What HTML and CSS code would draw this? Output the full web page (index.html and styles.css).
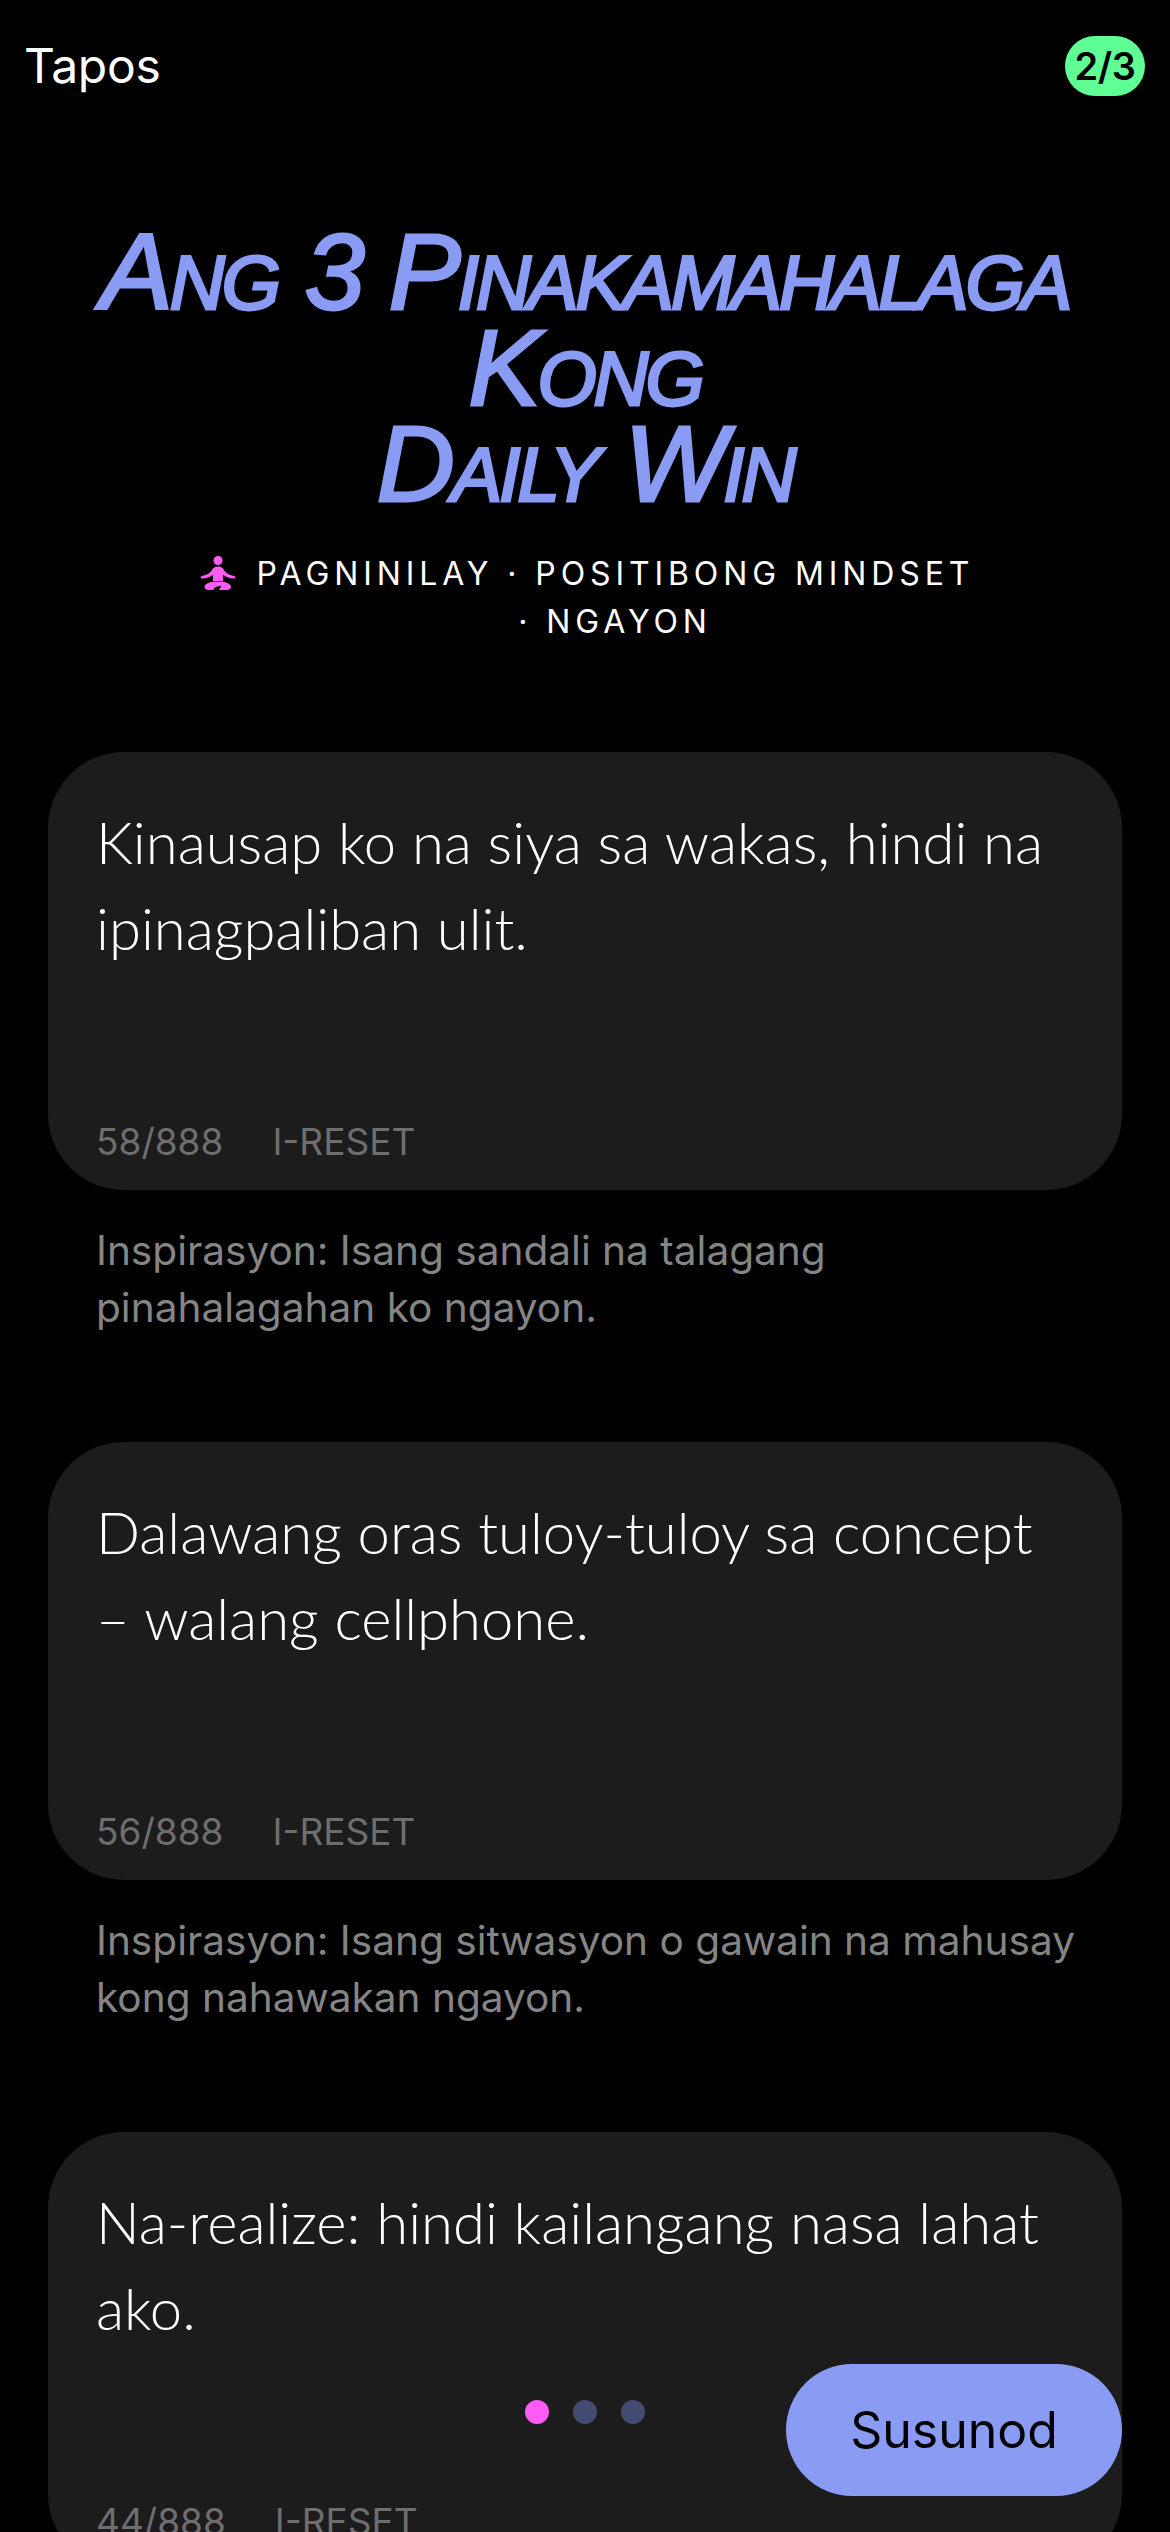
FILE: index.html
```html
<!DOCTYPE html>
<html lang="tl">
<head>
<meta charset="utf-8">
<title>Tapos</title>
<link rel="stylesheet" href="styles.css">
</head>
<body>
<div class="screen">
  <header class="topbar">
    <span class="done">Tapos</span>
    <span class="badge">2/3</span>
  </header>
  <section class="hero">
    <h1 class="title">Ang 3 Pinakamahalaga<br>Kong<br>Daily Win</h1>
    <p class="sub">
      <svg class="yoga" viewBox="0 0 36 34" aria-hidden="true"><circle cx="18" cy="4.500" r="4.500"/><path d="M18 10.500c-3 0-4.800 1.300-6 3.500-1.700 2.900-4.500 4.800-10.200 6-1.700.4-1.600 2.600.3 2.500 4.900-.1 8.500-1.600 10.900-3.700v6.500h10v-6.500c2.400 2.100 6 3.600 10.900 3.700 1.900.1 2-2.100.3-2.500-5.700-1.200-8.500-3.100-10.200-6-1.200-2.200-3-3.500-6-3.500z"/><path d="M12 25.800c-4 1-7.500 2.600-7.500 5 0 1.800 1.700 3.200 4.300 3.200h4.500c.8-2.400 3.500-4 8.200-4.200l-2.500 4.200h7.700c2.600 0 4.300-1.400 4.300-3.200 0-2.400-3.500-4-7.500-5z"/></svg>
      PAGNINILAY · POSITIBONG MINDSET <span class="tail">· NGAYON</span>
    </p>
  </section>
  <main class="list">
    <article class="entry">
      <div class="card">
        <p class="text">Kinausap ko na siya sa wakas, hindi na ipinagpaliban ulit.</p>
        <div class="meta"><span>58/888</span><span>I-RESET</span></div>
      </div>
      <p class="hint">Inspirasyon: Isang sandali na talagang pinahalagahan ko ngayon.</p>
    </article>
    <article class="entry">
      <div class="card">
        <p class="text">Dalawang oras tuloy-tuloy sa concept – walang cellphone.</p>
        <div class="meta"><span>56/888</span><span>I-RESET</span></div>
      </div>
      <p class="hint">Inspirasyon: Isang sitwasyon o gawain na mahusay kong nahawakan ngayon.</p>
    </article>
    <article class="entry">
      <div class="card">
        <p class="text">Na-realize: hindi kailangang nasa lahat ako.</p>
        <div class="meta"><span>44/888</span><span>I-RESET</span></div>
      </div>
    </article>
  </main>
  <div class="dots"><i class="dot on"></i><i class="dot"></i><i class="dot"></i></div>
  <button class="next">Susunod</button>
</div>
</body>
</html>
```
FILE: styles.css
```css
* { box-sizing: border-box; }
html, body { margin: 0; padding: 0; background: #000; }
.screen {
  position: relative;
  width: 1170px;
  height: 2532px;
  overflow: hidden;
  background: #000;
  color: #fff;
  font-family: Inter, "Liberation Sans", sans-serif;
}
.topbar {
  display: flex;
  justify-content: space-between;
  align-items: center;
  height: 60px;
  margin-top: 36px;
  padding: 0 25px 0 24px;
}
.done { font-size: 48px; line-height: 60px; letter-spacing: -0.3px; }
.badge {
  width: 80px;
  height: 60px;
  border-radius: 30px;
  background: #5fff96;
  color: #000;
  font-size: 38px;
  font-weight: 600;
  line-height: 60px;
  text-align: center;
  letter-spacing: -0.5px;
}
.hero { padding: 128px 48px 0; text-align: center; }
.title {
  margin: 0;
  color: #8a9bf4;
  font-family: "Liberation Sans", sans-serif;
  font-size: 108px;
  font-style: italic;
  font-weight: 400;
  font-variant: small-caps;
  line-height: 96px;
  letter-spacing: -3px;
  -webkit-text-stroke: 3px #8a9bf4;
}
.sub {
  width: 800px;
  margin: 38px auto 0;
  padding-left: 4px;
  font-size: 32px;
  line-height: 48px;
  letter-spacing: 4.9px;
}
.tail { display: inline-block; margin-left: 56px; }
.yoga { width: 36px; height: 34px; margin-right: 7px; vertical-align: -5px; fill: #ff5cf5; }
.list { padding: 0 48px; margin-top: 106px; display: flex; flex-direction: column; gap: 106px; }
.card {
  display: flex;
  flex-direction: column;
  justify-content: space-between;
  height: 438px;
  padding: 47px 48px 23px;
  border-radius: 76px;
  background: #1c1c1c;
}
.text {
  margin: 0;
  font-family: Lato, sans-serif;
  font-size: 58px;
  font-weight: 300;
  line-height: 86px;
}
.meta { display: flex; gap: 49px; color: #6e6e6e; font-size: 37px; line-height: 50px; }
.hint { margin: 32px 30px 0 48px; color: #858585; font-size: 40.6px; line-height: 57px; }
.dots { position: absolute; left: 525px; top: 2400px; display: flex; gap: 24px; }
.dot { width: 24px; height: 24px; border-radius: 50%; background: #434b73; }
.dot.on { background: #ff5cf5; }
.next {
  position: absolute;
  left: 786px;
  top: 2364px;
  width: 336px;
  height: 132px;
  border: 0;
  border-radius: 66px;
  background: #8a9bf4;
  color: #000;
  font-family: Inter, "Liberation Sans", sans-serif;
  font-size: 50px;
}
```
